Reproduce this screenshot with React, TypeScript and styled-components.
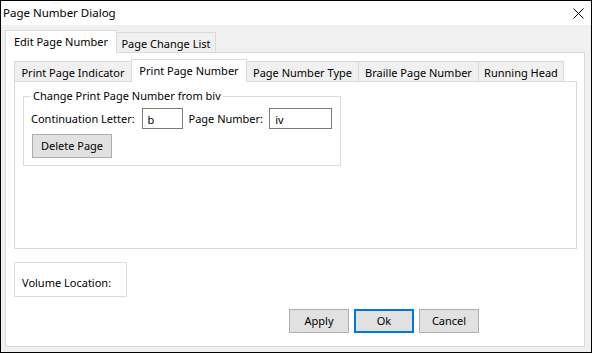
import React from "react";
import styled, { createGlobalStyle } from "styled-components";

const GlobalStyle = createGlobalStyle`
  html, body { margin: 0; padding: 0; background: #ffffff; }
  body {
    font-family: "Noto Sans", "Open Sans", sans-serif;
    font-size: 11px;
    color: #000000;
  }
  * { box-sizing: border-box; }
`;

const Window = styled.div`
  width: 592px;
  height: 353px;
  border: 1px solid #000000;
  display: flex;
  flex-direction: column;
  background: #f0f0f0;
`;

const TitleBar = styled.div`
  height: 24px;
  flex: none;
  background: #ffffff;
  display: flex;
  align-items: center;
  justify-content: space-between;
  padding: 0 7px 0 2px;
`;

const Title = styled.span`
  line-height: 16px;
  font-size: 11.5px;
`;

const CloseButton = styled.span`
  display: flex;
  width: 11px;
  height: 11px;
  margin-top: 1px;
`;

const Body = styled.div`
  flex: 1;
  display: flex;
  flex-direction: column;
  padding: 5px 6px 5px 4px;
  min-height: 0;
`;

const TabStrip = styled.div<{ $h: number }>`
  display: flex;
  align-items: flex-end;
  height: ${(p) => p.$h}px;
  flex: none;
`;

const Tab = styled.div<{ $active?: boolean; $w: number; $bg: string; $first?: boolean }>`
  position: relative;
  width: ${(p) => p.$w}px;
  height: ${(p) => (p.$active ? 23 : 20)}px;
  margin-bottom: ${(p) => (p.$active ? -1 : 0)}px;
  margin-left: ${(p) => (p.$first ? 0 : -1)}px;
  z-index: ${(p) => (p.$active ? 2 : 1)};
  border: 1px solid #d9d9d9;
  border-bottom: none;
  background: ${(p) => (p.$active ? "#ffffff" : p.$bg)};
  display: flex;
  align-items: center;
  justify-content: center;
  padding-top: ${(p) => (p.$active ? 0 : 2)}px;
  white-space: nowrap;
  line-height: 16px;
`;

const Pane = styled.div`
  flex: 1;
  min-height: 0;
  background: #ffffff;
  border: 1px solid #d9d9d9;
  display: flex;
  flex-direction: column;
  padding: 6px 7px 0 8px;
`;

const InnerPane = styled.div`
  height: 168px;
  flex: none;
  border: 1px solid #d9d9d9;
  background: #ffffff;
  padding: 6px 8px 0 8px;
`;

const GroupBox = styled.fieldset`
  width: 318px;
  margin: 0;
  min-width: 0;
  border: 1px solid #dcdcdc;
  padding: 4px 8px 7px 7px;
`;

const Legend = styled.legend`
  padding: 0 2px;
  line-height: 16px;
`;

const FieldRow = styled.div`
  display: flex;
  align-items: center;
  height: 21px;
`;

const Label = styled.span<{ $w: number; $pl?: number }>`
  width: ${(p) => p.$w}px;
  padding-left: ${(p) => p.$pl ?? 0}px;
  white-space: nowrap;
  line-height: 16px;
`;

const TextBox = styled.div<{ $w: number }>`
  width: ${(p) => p.$w}px;
  height: 21px;
  border: 1px solid #7a7a7a;
  background: #ffffff;
  padding: 2px 0 0 5px;
  line-height: 17px;
`;

const Button = styled.button<{ $w: number; $default?: boolean }>`
  width: ${(p) => p.$w}px;
  height: 24px;
  padding: 0;
  background: #e1e1e1;
  border: ${(p) => (p.$default ? "2px solid #0078d7" : "1px solid #adadad")};
  font-family: inherit;
  font-size: 11px;
  color: #000000;
  line-height: 16px;
`;

const DeleteButton = styled(Button)`
  margin: 5px 0 0 1px;
  display: block;
`;

const VolumeBox = styled.div`
  width: 113px;
  height: 35px;
  margin-top: 13px;
  border: 1px solid #dcdcdc;
  padding: 12px 0 0 7px;
  line-height: 16px;
  flex: none;
`;

const ButtonRow = styled.div`
  display: flex;
  justify-content: flex-end;
  gap: 5px;
  margin-top: 12px;
  padding-right: 98px;
`;

const outerTabs = [
  { label: "Edit Page Number", w: 112, active: true },
  { label: "Page Change List", w: 100 },
];

const innerTabs = [
  { label: "Print Page Indicator", w: 118 },
  { label: "Print Page Number", w: 116, active: true },
  { label: "Page Number Type", w: 113 },
  { label: "Braille Page Number", w: 121 },
  { label: "Running Head", w: 86 },
];

export default function App() {
  return (
    <>
      <GlobalStyle />
      <Window>
        <TitleBar>
          <Title>Page Number Dialog</Title>
          <CloseButton>
            <svg width="11" height="11" viewBox="0 0 11 11">
              <path d="M0.5 0.5 L10.5 10.5 M10.5 0.5 L0.5 10.5" stroke="#000" strokeWidth="1" fill="none" />
            </svg>
          </CloseButton>
        </TitleBar>
        <Body>
          <TabStrip $h={22}>
            {outerTabs.map((t, i) => (
              <Tab key={t.label} $w={t.w} $active={t.active} $bg="#f0f0f0" $first={i === 0}>
                {t.label}
              </Tab>
            ))}
          </TabStrip>
          <Pane>
            <TabStrip $h={22}>
              {innerTabs.map((t, i) => (
                <Tab key={t.label} $w={t.w} $active={t.active} $bg="#f0f0f0" $first={i === 0}>
                  {t.label}
                </Tab>
              ))}
            </TabStrip>
            <InnerPane>
              <GroupBox>
                <Legend>Change Print Page Number from biv</Legend>
                <FieldRow>
                  <Label $w={111}>Continuation Letter:</Label>
                  <TextBox $w={42}>b</TextBox>
                  <Label $w={86} $pl={5}>Page Number:</Label>
                  <TextBox $w={63}>iv</TextBox>
                </FieldRow>
                <DeleteButton $w={80}>Delete Page</DeleteButton>
              </GroupBox>
            </InnerPane>
            <VolumeBox>Volume Location:</VolumeBox>
            <ButtonRow>
              <Button $w={60}>Apply</Button>
              <Button $w={60} $default>Ok</Button>
              <Button $w={60}>Cancel</Button>
            </ButtonRow>
          </Pane>
        </Body>
      </Window>
    </>
  );
}
